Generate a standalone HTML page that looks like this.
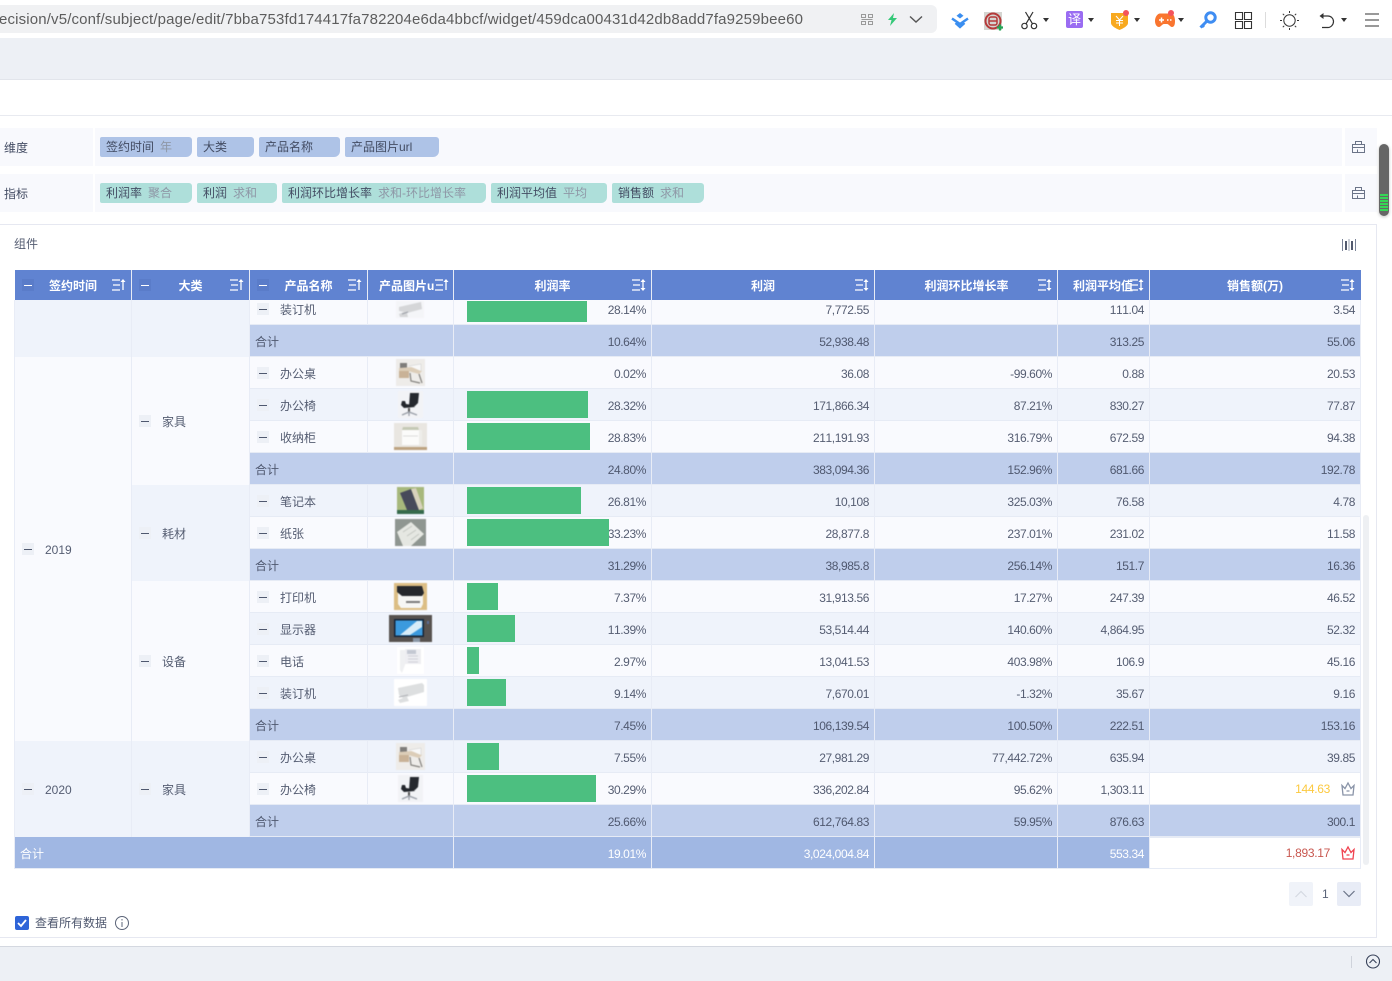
<!DOCTYPE html>
<html lang="zh">
<head>
<meta charset="utf-8">
<title>组件</title>
<style>
html,body{margin:0;padding:0;width:1392px;height:981px;overflow:hidden;background:#fff}
body{position:relative;font:12px/1.2 "Liberation Sans","Noto Sans CJK SC",sans-serif;color:#555d72;font-kerning:none}
div,span,svg{position:absolute;display:block;box-sizing:border-box}
svg{overflow:visible}
.l{white-space:nowrap}
.chip{height:20px;top:137px;border-radius:2px 3px 6px 2px;background:#aec3e7;line-height:20px;padding-left:6px;color:#434c63;white-space:nowrap;overflow:hidden}
.chip.m{top:183px;background:#aedfda}
.chip i{font-style:normal;color:#8e97a6;margin-left:6px}
.band{left:0;width:1342px;height:38px;background:#f8f9fd}
.band2{left:1345px;width:32px;height:38px;background:#f8f9fd}
.sep{left:93px;width:2px;height:38px;background:#fff}
.h{top:270px;height:30px;line-height:32px;color:#fff;font-weight:bold;text-align:center;white-space:nowrap}
.r{left:15px;width:1346px;border-bottom:1px solid #e6ebf5}
.lt{background:#f9fafe}.dk{background:#eff3fb}
.sub{background:#bfceec;left:250px;width:1111px;border-bottom:1px solid #e6ebf5;color:#4f586f}
.n{letter-spacing:-.4px;white-space:nowrap}
.a{right:715px}.b{right:492px}.c{right:309px}.d{right:217px}.e{right:6px}
.sl{left:5px;color:#4f586f}
.nm{left:265px;white-space:nowrap}
.box{width:12px;height:12px;background:#edf0f6}
.box:after{content:"";position:absolute;left:2px;top:6px;width:8px;height:1px;background:#4f586f}
.hb{background:#5a7cc9}
.hb:after{background:#fff}
.bar{left:467px;background:#4cbf80}
.v{width:1px;background:#e8ecf6}
.th{filter:blur(.45px)}
</style>
</head>
<body>
<!-- browser bar -->
<div style="left:0;top:5px;width:937px;height:28px;background:#f0f1f3;border-radius:0 6px 6px 0"></div>
<div class="l" style="left:-1px;top:9px;font-size:15px;line-height:21px;color:#5d5d5d;letter-spacing:.15px">ecision/v5/conf/subject/page/edit/7bba753fd174417fa782204e6da4bbcf/widget/459dca00431d42db8add7fa9259bee60</div>
<svg style="left:861px;top:14px" width="12" height="12" fill="none" stroke="#9a9a9a"><path d="M.5.5h4v3h-4zM7.500.5h4v3h-4zM.5 7.500h4v3h-4zM7.500 7.500h4v3h-4zM.5 5.500h11"/></svg>
<svg style="left:887px;top:13px" width="11" height="13"><path d="M7 0 1 7h3.500L3 13l7-8H6z" fill="#35c878"/></svg>
<svg style="left:909px;top:15px" width="14" height="9" fill="none" stroke="#555" stroke-width="1.400"><path d="M1 1.500 7 7l6-5.500"/></svg>
<svg style="left:950px;top:12px" width="20" height="17" fill="none" stroke="#3a8ef0" stroke-width="2.400"><path d="M10 1 13.500 3.800 10 6.500 6.500 3.800z" fill="#3a8ef0" stroke="none"/><path d="M2 6.500l8 5.500 8-5.500"/><path d="M5.500 11l4.500 4 4.500-4"/></svg>
<svg style="left:984px;top:12px" width="20" height="19"><rect width="18" height="18" fill="#d5d5d1"/><circle cx="9" cy="9" r="7.500" fill="none" stroke="#b53a3a" stroke-width="2"/><rect x="5" y="5" width="8" height="8" rx="2" fill="none" stroke="#b53a3a" stroke-width="1.500"/><path d="M5 9h8" stroke="#b53a3a" stroke-width="1.500"/><path d="M13 15.500h6M16 12.500v6" stroke="#23a455" stroke-width="2.200"/></svg>
<svg style="left:1021px;top:11px" width="17" height="19" fill="none" stroke="#333" stroke-width="1.200"><circle cx="3.500" cy="15" r="2.700"/><circle cx="13" cy="15" r="2.700"/><path d="M5 12.800 12 1M11.500 12.800 4.500 1"/></svg>
<svg style="left:1043px;top:18px" width="6" height="4"><path d="M0 0h6L3 4z" fill="#333"/></svg>
<div style="left:1066px;top:11px;width:17px;height:17px;background:#9a6cf2;border-radius:2px;color:#fff;font-size:13px;line-height:17px;text-align:center">译</div>
<svg style="left:1088px;top:18px" width="6" height="4"><path d="M0 0h6L3 4z" fill="#333"/></svg>
<svg style="left:1111px;top:10px" width="21" height="21"><path d="M0 3h17v10c0 3-5 5.500-8.500 7C5 18.500 0 16 0 13z" fill="#f8a91f"/><circle cx="15" cy="3" r="3" fill="#f4545c"/><path d="M5 6l3.500 4L12 6M5 10.500h7M5 13h7M8.500 10v6" fill="none" stroke="#fff" stroke-width="1"/></svg>
<svg style="left:1134px;top:18px" width="6" height="4"><path d="M0 0h6L3 4z" fill="#333"/></svg>
<svg style="left:1155px;top:10px" width="21" height="19"><path d="M5 3.500h11c2.500 0 4 3.500 4 7.500 0 3-.500 6-3 6-2 0-3-3-5-3H9c-2 0-3 3-5 3-2.500 0-4-3-4-6 0-4 2.500-7.500 5-7.500z" fill="#f9752f"/><circle cx="16" cy="3" r="3" fill="#f4545c"/><path d="M4 10h5M6.500 7.500v5M12 10h1.500M15 10h1.500" stroke="#fff" stroke-width="1.500" fill="none"/></svg>
<svg style="left:1178px;top:18px" width="6" height="4"><path d="M0 0h6L3 4z" fill="#333"/></svg>
<svg style="left:1199px;top:11px" width="18" height="18" fill="none" stroke="#3f8df2" stroke-width="3"><circle cx="11.500" cy="6.500" r="4.700"/><path d="M7.500 10.500 1.500 16.500M3 14l2 2"/></svg>
<svg style="left:1235px;top:12px" width="17" height="17" fill="none" stroke="#333" stroke-width="1.100"><path d="M.5.500h7v7h-7zM9.500.500h7v7h-7zM.5 9.500h7v7h-7zM9.500 9.500h7v7h-7z"/></svg>
<div style="left:1265px;top:12px;width:1px;height:16px;background:#dcdcdc"></div>
<svg style="left:1280px;top:11px" width="19" height="19" fill="none" stroke="#333"><circle cx="9.500" cy="9.500" r="5.700"/><path d="M9.500 0v2M9.500 17v2M0 9.500h2M17 9.500h2M2.800 2.800l1.400 1.400M14.800 14.800l1.400 1.400M2.800 16.200l1.400-1.400M14.800 4.200l1.400-1.400"/></svg>
<svg style="left:1319px;top:12px" width="16" height="17" fill="none" stroke="#333" stroke-width="1.200"><path d="M2 4h7c3 0 5.500 2.500 5.500 5.500S12 15.500 9 15.500H3"/><path d="M4.500 1 .5 4l4 3z" fill="#333" stroke="none"/></svg>
<svg style="left:1341px;top:18px" width="6" height="4"><path d="M0 0h6L3 4z" fill="#333"/></svg>
<svg style="left:1365px;top:13px" width="14" height="14" stroke="#333" stroke-width="1.100"><path d="M0 1h14M0 7h14M0 13h14"/></svg>
<div style="left:0;top:38px;width:1392px;height:42px;background:#edf0f5;border-bottom:1px solid #e2e5eb"></div>
<div style="left:0;top:115px;width:1392px;height:1px;background:#e8eaf0"></div>

<!-- field bands -->
<div class="band" style="top:128px"></div><div class="band2" style="top:128px"></div><div class="sep" style="top:128px"></div>
<div class="band" style="top:174px"></div><div class="band2" style="top:174px"></div><div class="sep" style="top:174px"></div>
<div class="l" style="left:4px;top:141px;color:#434c63">维度</div>
<div class="l" style="left:4px;top:187px;color:#434c63">指标</div>
<div class="chip" style="left:100px;width:92px">签约时间<i>年</i></div>
<div class="chip" style="left:197px;width:57px">大类</div>
<div class="chip" style="left:259px;width:81px">产品名称</div>
<div class="chip" style="left:345px;width:94px">产品图片url</div>
<div class="chip m" style="left:100px;width:92px">利润率<i>聚合</i></div>
<div class="chip m" style="left:197px;width:80px">利润<i>求和</i></div>
<div class="chip m" style="left:282px;width:204px">利润环比增长率<i>求和-环比增长率</i></div>
<div class="chip m" style="left:491px;width:116px">利润平均值<i>平均</i></div>
<div class="chip m" style="left:612px;width:92px">销售额<i>求和</i></div>
<svg style="left:1352px;top:141px" width="13" height="12" fill="none" stroke="#6b7488"><path d="M.5 3.500h12v8H.5zM3.500 3.500V.500h6v3M.5 6.500h12M5.500 8.500v3"/></svg>
<svg style="left:1352px;top:187px" width="13" height="12" fill="none" stroke="#6b7488"><path d="M.5 3.500h12v8H.5zM3.500 3.500V.500h6v3M.5 6.500h12M5.500 8.500v3"/></svg>
<!-- scroll widget -->
<div style="left:1379px;top:144px;width:10px;height:72px;background:#666;border-radius:5px;box-shadow:0 1px 3px rgba(0,0,0,.25);overflow:hidden">
<div style="left:1px;top:50px;width:8px;height:18px;background:repeating-linear-gradient(#35d655 0 2px,#666 2px 3px)"></div></div>

<!-- panel -->
<div style="left:-2px;top:224px;width:1379px;height:714px;border:1px solid #e6e8f1"></div>
<div class="l" style="left:14px;top:237px;color:#555d72">组件</div>
<svg style="left:1342px;top:239px" width="14" height="12" fill="none"><path d="M.5 0v12M13.500 0v12" stroke="#7a8397"/><path d="M4 2v9M10 2v9" stroke="#525a6e" stroke-width="2"/><path d="M7 0v12" stroke="#9aa2b2"/></svg>
<div style="left:1363px;top:515px;width:6px;height:350px;background:#eef0f3;border-radius:3px"></div>

<!-- table header -->
<div style="left:15px;top:270px;width:1346px;height:30px;background:#6083d1"></div>
<div class="box hb" style="left:22px;top:279px"></div>
<div class="box hb" style="left:139px;top:279px"></div>
<div class="box hb" style="left:257px;top:279px"></div>
<div class="h" style="left:49px;width:48px">签约时间</div>
<div class="h" style="left:178px;width:25px">大类</div>
<div class="h" style="left:284px;width:49px">产品名称</div>
<div class="h" style="left:379px;width:60px;text-align:left">产品图片u</div>
<div class="h" style="left:534px;width:37px">利润率</div>
<div class="h" style="left:751px;width:24px">利润</div>
<div class="h" style="left:924px;width:85px">利润环比增长率</div>
<div class="h" style="left:1073px;width:60px;text-align:left;overflow:hidden">利润平均值</div>
<div class="h" style="left:1226px;width:58px">销售额(万)</div>
<svg style="left:112px;top:279px" width="14" height="12" stroke="#fff" stroke-width="1.300" fill="none"><path d="M0 1h8M1 6h7M0 11h8M11 11V1"/><path d="M11 0l-2.500 3h5z" fill="#fff" stroke="none"/></svg>
<svg style="left:230px;top:279px" width="14" height="12" stroke="#fff" stroke-width="1.300" fill="none"><path d="M0 1h8M1 6h7M0 11h8M11 11V1"/><path d="M11 0l-2.500 3h5z" fill="#fff" stroke="none"/></svg>
<svg style="left:348px;top:279px" width="14" height="12" stroke="#fff" stroke-width="1.300" fill="none"><path d="M0 1h8M1 6h7M0 11h8M11 11V1"/><path d="M11 0l-2.500 3h5z" fill="#fff" stroke="none"/></svg>
<svg style="left:435px;top:279px" width="14" height="12" stroke="#fff" stroke-width="1.300" fill="none"><path d="M0 1h8M1 6h7M0 11h8M11 11V1"/><path d="M11 0l-2.500 3h5z" fill="#fff" stroke="none"/></svg>
<svg style="left:632px;top:279px" width="14" height="12" stroke="#fff" stroke-width="1.300" fill="none"><path d="M0 1h8M1 6h7M0 11h8M11 9V3"/><path d="M11 0l-2.500 3h5zM11 12l-2.500-3h5z" fill="#fff" stroke="none"/></svg>
<svg style="left:855px;top:279px" width="14" height="12" stroke="#fff" stroke-width="1.300" fill="none"><path d="M0 1h8M1 6h7M0 11h8M11 9V3"/><path d="M11 0l-2.500 3h5zM11 12l-2.500-3h5z" fill="#fff" stroke="none"/></svg>
<svg style="left:1038px;top:279px" width="14" height="12" stroke="#fff" stroke-width="1.300" fill="none"><path d="M0 1h8M1 6h7M0 11h8M11 9V3"/><path d="M11 0l-2.500 3h5zM11 12l-2.500-3h5z" fill="#fff" stroke="none"/></svg>
<svg style="left:1130px;top:279px" width="14" height="12" stroke="#fff" stroke-width="1.300" fill="none"><path d="M0 1h8M1 6h7M0 11h8M11 9V3"/><path d="M11 0l-2.500 3h5zM11 12l-2.500-3h5z" fill="#fff" stroke="none"/></svg>
<svg style="left:1341px;top:279px" width="14" height="12" stroke="#fff" stroke-width="1.300" fill="none"><path d="M0 1h8M1 6h7M0 11h8M11 9V3"/><path d="M11 0l-2.500 3h5zM11 12l-2.500-3h5z" fill="#fff" stroke="none"/></svg>

<!-- rows -->
<div class="r lt" style="top:300px;height:25px;line-height:20px"><span class="nm">装订机</span><span class="n a">28.14%</span><span class="n b">7,772.55</span><span class="n d">111.04</span><span class="n e">3.54</span></div>
<div class="r lt" style="top:357px;height:32px;line-height:34px"><span class="nm">办公桌</span><span class="n a">0.02%</span><span class="n b">36.08</span><span class="n c">-99.60%</span><span class="n d">0.88</span><span class="n e">20.53</span></div>
<div class="r dk" style="top:389px;height:32px;line-height:34px"><span class="nm">办公椅</span><span class="n a">28.32%</span><span class="n b">171,866.34</span><span class="n c">87.21%</span><span class="n d">830.27</span><span class="n e">77.87</span></div>
<div class="r lt" style="top:421px;height:32px;line-height:34px"><span class="nm">收纳柜</span><span class="n a">28.83%</span><span class="n b">211,191.93</span><span class="n c">316.79%</span><span class="n d">672.59</span><span class="n e">94.38</span></div>
<div class="r dk" style="top:485px;height:32px;line-height:34px"><span class="nm">笔记本</span><span class="n a">26.81%</span><span class="n b">10,108</span><span class="n c">325.03%</span><span class="n d">76.58</span><span class="n e">4.78</span></div>
<div class="r lt" style="top:517px;height:32px;line-height:34px"><span class="nm">纸张</span><span class="n a">33.23%</span><span class="n b">28,877.8</span><span class="n c">237.01%</span><span class="n d">231.02</span><span class="n e">11.58</span></div>
<div class="r lt" style="top:581px;height:32px;line-height:34px"><span class="nm">打印机</span><span class="n a">7.37%</span><span class="n b">31,913.56</span><span class="n c">17.27%</span><span class="n d">247.39</span><span class="n e">46.52</span></div>
<div class="r dk" style="top:613px;height:32px;line-height:34px"><span class="nm">显示器</span><span class="n a">11.39%</span><span class="n b">53,514.44</span><span class="n c">140.60%</span><span class="n d">4,864.95</span><span class="n e">52.32</span></div>
<div class="r lt" style="top:645px;height:32px;line-height:34px"><span class="nm">电话</span><span class="n a">2.97%</span><span class="n b">13,041.53</span><span class="n c">403.98%</span><span class="n d">106.9</span><span class="n e">45.16</span></div>
<div class="r dk" style="top:677px;height:32px;line-height:34px"><span class="nm">装订机</span><span class="n a">9.14%</span><span class="n b">7,670.01</span><span class="n c">-1.32%</span><span class="n d">35.67</span><span class="n e">9.16</span></div>
<div class="r dk" style="top:741px;height:32px;line-height:34px"><span class="nm">办公桌</span><span class="n a">7.55%</span><span class="n b">27,981.29</span><span class="n c">77,442.72%</span><span class="n d">635.94</span><span class="n e">39.85</span></div>
<div class="r lt" style="top:773px;height:32px;line-height:34px"><span class="nm">办公椅</span><span class="n a">30.29%</span><span class="n b">336,202.84</span><span class="n c">95.62%</span><span class="n d">1,303.11</span></div>

<!-- merged left cells -->
<div class="dk" style="left:15px;top:300px;width:235px;height:57px"></div>
<div class="lt" style="left:15px;top:357px;width:117px;height:384px"></div>
<div class="lt" style="left:132px;top:357px;width:118px;height:128px"></div>
<div class="dk" style="left:132px;top:485px;width:118px;height:96px"></div>
<div class="lt" style="left:132px;top:581px;width:118px;height:160px"></div>
<div class="dk" style="left:15px;top:741px;width:235px;height:96px"></div>
<div class="box" style="left:22px;top:543px"></div><div class="n" style="left:45px;top:543px;line-height:15px;letter-spacing:0">2019</div>
<div class="box" style="left:22px;top:783px"></div><div class="n" style="left:45px;top:783px;line-height:15px;letter-spacing:0">2020</div>
<div class="box" style="left:139px;top:415px"></div><div class="l" style="left:162px;top:415px;line-height:15px">家具</div>
<div class="box" style="left:139px;top:527px"></div><div class="l" style="left:162px;top:527px;line-height:15px">耗材</div>
<div class="box" style="left:139px;top:655px"></div><div class="l" style="left:162px;top:655px;line-height:15px">设备</div>
<div class="box" style="left:139px;top:783px"></div><div class="l" style="left:162px;top:783px;line-height:15px">家具</div>

<!-- sub-total rows -->
<div class="sub" style="top:325px;height:32px;line-height:34px"><span class="sl">合计</span><span class="n a">10.64%</span><span class="n b">52,938.48</span><span class="n d">313.25</span><span class="n e">55.06</span></div>
<div class="sub" style="top:453px;height:32px;line-height:34px"><span class="sl">合计</span><span class="n a">24.80%</span><span class="n b">383,094.36</span><span class="n c">152.96%</span><span class="n d">681.66</span><span class="n e">192.78</span></div>
<div class="sub" style="top:549px;height:32px;line-height:34px"><span class="sl">合计</span><span class="n a">31.29%</span><span class="n b">38,985.8</span><span class="n c">256.14%</span><span class="n d">151.7</span><span class="n e">16.36</span></div>
<div class="sub" style="top:709px;height:32px;line-height:34px"><span class="sl">合计</span><span class="n a">7.45%</span><span class="n b">106,139.54</span><span class="n c">100.50%</span><span class="n d">222.51</span><span class="n e">153.16</span></div>
<div class="sub" style="top:805px;height:32px;line-height:34px"><span class="sl">合计</span><span class="n a">25.66%</span><span class="n b">612,764.83</span><span class="n c">59.95%</span><span class="n d">876.63</span><span class="n e">300.1</span></div>
<div style="left:15px;top:837px;width:1346px;height:32px;line-height:34px;background:#a0b7e3;color:#fff;border-bottom:1px solid #e6ebf5"><span style="left:5px">合计</span><span class="n a">19.01%</span><span class="n b">3,024,004.84</span><span class="n d">553.34</span></div>

<!-- highlighted cells -->
<div style="left:1150px;top:773px;width:211px;height:32px;background:#fff;border-bottom:1px solid #e6ebf5"></div>
<div class="n" style="right:62px;top:782px;line-height:15px;color:#fcc93f;letter-spacing:-.3px">144.63</div>
<svg style="left:1341px;top:782px" width="14" height="14" fill="none" stroke="#8a94a8" stroke-width="1.300"><path d="M1 3.500 4 6.500 7 1l3 5.500 3-3-1 9.500H2zM5.500 9h3"/></svg>
<div style="left:1150px;top:837px;width:211px;height:32px;background:#fff;border:1px solid #e6ebf5;border-left:0"></div>
<div class="n" style="right:62px;top:846px;line-height:15px;color:#c8574f;letter-spacing:-.3px">1,893.17</div>
<svg style="left:1341px;top:846px" width="14" height="14" fill="none" stroke="#f0424f" stroke-width="1.300"><path d="M1 3.500 4 6.500 7 1l3 5.500 3-3-1 9.500H2zM5.500 9h3"/></svg>

<!-- bars -->
<div class="bar" style="top:301px;width:120px;height:21px"></div>
<div class="bar" style="top:391px;width:121px;height:27px"></div>
<div class="bar" style="top:423px;width:123px;height:27px"></div>
<div class="bar" style="top:487px;width:114px;height:27px"></div>
<div class="bar" style="top:519px;width:142px;height:27px"></div>
<div class="bar" style="top:583px;width:31px;height:27px"></div>
<div class="bar" style="top:615px;width:48px;height:27px"></div>
<div class="bar" style="top:647px;width:12px;height:27px"></div>
<div class="bar" style="top:679px;width:39px;height:27px"></div>
<div class="bar" style="top:743px;width:32px;height:27px"></div>
<div class="bar" style="top:775px;width:129px;height:27px"></div>

<!-- name collapse boxes -->
<div class="box" style="left:257px;top:303px"></div>
<div class="box" style="left:257px;top:367px"></div>
<div class="box" style="left:257px;top:399px"></div>
<div class="box" style="left:257px;top:431px"></div>
<div class="box" style="left:257px;top:495px"></div>
<div class="box" style="left:257px;top:527px"></div>
<div class="box" style="left:257px;top:591px"></div>
<div class="box" style="left:257px;top:623px"></div>
<div class="box" style="left:257px;top:655px"></div>
<div class="box" style="left:257px;top:687px"></div>
<div class="box" style="left:257px;top:751px"></div>
<div class="box" style="left:257px;top:783px"></div>

<!-- grid lines -->
<div class="v" style="left:14px;top:300px;height:569px"></div>
<div class="v" style="left:131px;top:270px;height:87px"></div>
<div class="v" style="left:131px;top:357px;height:480px"></div>
<div class="v" style="left:249px;top:270px;height:567px"></div>
<div class="v" style="left:367px;top:270px;height:55px"></div>
<div class="v" style="left:367px;top:357px;height:96px"></div>
<div class="v" style="left:367px;top:485px;height:64px"></div>
<div class="v" style="left:367px;top:581px;height:128px"></div>
<div class="v" style="left:367px;top:741px;height:64px"></div>
<div class="v" style="left:453px;top:270px;height:599px"></div>
<div class="v" style="left:651px;top:270px;height:599px"></div>
<div class="v" style="left:874px;top:270px;height:599px"></div>
<div class="v" style="left:1057px;top:270px;height:599px"></div>
<div class="v" style="left:1149px;top:270px;height:599px"></div>
<div class="v" style="left:1360px;top:300px;height:569px"></div>

<!-- thumbnails -->
<svg class="th" style="left:396px;top:301px" width="28" height="17"><rect width="28" height="17" fill="#f4f5f8"/><path d="M3 6 25 1l1 7-15 4 1 4H4l-1-3 5-2-5-1z" fill="#d5d6d8"/><path d="M6 13l6-2" stroke="#9a9ea6"/></svg>
<svg class="th" style="left:396px;top:359px" width="29" height="27"><rect width="29" height="27" fill="#eeece9"/><path d="M3 10h10v9H3z" fill="#c9b297"/><path d="M4 4h7v6H4z" fill="#7f7d7a"/><path d="M3 9l14-1 9 4-3 3-11-3H3z" fill="#dccdb8"/><path d="M13 7l12-2v7" fill="#f8f8f8" stroke="#ccc" stroke-width=".5"/><path d="M23 15l3 9M14 14l1 8 9 2" stroke="#85837f" fill="none" stroke-width="1.200"/></svg>
<svg class="th" style="left:398px;top:391px" width="25" height="27"><rect width="25" height="27" fill="#f2f3f6"/><path d="M12 2h9l-1 10-3 3h-6z" fill="#26292f"/><path d="M4 10h3l1 3 7 1 2 2-11 1-3-3z" fill="#23262c"/><path d="M11 17v4" stroke="#555" stroke-width="2"/><path d="M4 24l7-3 8 3M11 21v4" stroke="#9a9fa8" fill="none" stroke-width="1.300"/></svg>
<svg class="th" style="left:394px;top:423px" width="33" height="27"><rect width="33" height="27" fill="#e9e6e1"/><path d="M8 7h17v15H8z" fill="#fbfbfa"/><path d="M25 7h3v15h-3z" fill="#eeedea"/><path d="M9 4h15l1 3H8z" fill="#c5c9b5"/><path d="M9 13h15" stroke="#ddd"/><rect y="24" width="33" height="3" fill="#bda381"/></svg>
<svg class="th" style="left:397px;top:487px" width="27" height="27"><rect width="27" height="27" fill="#a7b87c"/><path d="M3 6 14 2l8 21H10z" fill="#474a5a"/><path d="M14 2l5-1 7 20-4 2z" fill="#d8d2bc"/><rect y="23" width="27" height="4" fill="#366a4c"/></svg>
<svg class="th" style="left:395px;top:519px" width="31" height="27"><rect width="31" height="27" fill="#8f9691"/><path d="M2 13 16 3l13 12-13 12H8z" fill="#e5e7e2"/><path d="M8 13l9-6M12 17l9-6M16 21l8-6" stroke="#c3c7c1"/></svg>
<svg class="th" style="left:394px;top:583px" width="33" height="27"><rect width="33" height="27" fill="#dcbe85"/><path d="M4 10h25v11l-2 4H7l-3-4z" fill="#f6f6f4"/><path d="M3 3h25l2 7-2 3H8L3 9z" fill="#26282c"/><path d="M12 18h14v2H12z" fill="#7b7b7b"/></svg>
<svg class="th" style="left:389px;top:615px" width="43" height="27"><rect width="43" height="27" fill="#57524f"/><rect x="5" y="4" width="30" height="18" fill="#16263a"/><path d="M6.500 5.500h27v15h-27z" fill="#3b9ade"/><path d="M11 20 28 6h5v6L21 20z" fill="#d8ecf8"/><rect x="24" y="23" width="7" height="4" fill="#8a97a6"/><rect x="38" y="6" width="2" height="3" fill="#5b6d9a"/></svg>
<svg class="th" style="left:397px;top:647px" width="27" height="27"><rect width="27" height="27" fill="#fff"/><path d="M8 2h16v15H8z" fill="#eeeef2"/><path d="M10 3h9v4h-9z" fill="#c4c8d2"/><path d="M3 3h5v15l-3 8-2-3z" fill="#eff0f2"/><path d="M11 9h10M11 12h10M11 15h10" stroke="#cfd1d8"/></svg>
<svg class="th" style="left:394px;top:679px" width="33" height="27"><rect width="33" height="27" fill="#fff"/><path d="M4 9 28 4l2 2v7l-17 5 2 4-9 2-2-3 5-2-4-3z" fill="#dddfe0"/><path d="M5 18l9-2" stroke="#aeb0b5"/></svg>
<svg class="th" style="left:396px;top:743px" width="29" height="27"><rect width="29" height="27" fill="#eeece9"/><path d="M3 10h10v9H3z" fill="#c9b297"/><path d="M4 4h7v6H4z" fill="#7f7d7a"/><path d="M3 9l14-1 9 4-3 3-11-3H3z" fill="#dccdb8"/><path d="M13 7l12-2v7" fill="#f8f8f8" stroke="#ccc" stroke-width=".5"/><path d="M23 15l3 9M14 14l1 8 9 2" stroke="#85837f" fill="none" stroke-width="1.200"/></svg>
<svg class="th" style="left:398px;top:775px" width="25" height="27"><rect width="25" height="27" fill="#f2f3f6"/><path d="M12 2h9l-1 10-3 3h-6z" fill="#26292f"/><path d="M4 10h3l1 3 7 1 2 2-11 1-3-3z" fill="#23262c"/><path d="M11 17v4" stroke="#555" stroke-width="2"/><path d="M4 24l7-3 8 3M11 21v4" stroke="#9a9fa8" fill="none" stroke-width="1.300"/></svg>

<!-- pagination -->
<div style="left:1289px;top:882px;width:24px;height:24px;background:#f0f3f9;border-radius:2px"></div>
<svg style="left:1295px;top:890px" width="12" height="8" fill="none" stroke="#d5d9e2" stroke-width="1.200"><path d="M.5 7 6 1.500 11.500 7"/></svg>
<div class="l" style="left:1322px;top:887px;line-height:14px;color:#5b6478">1</div>
<div style="left:1337px;top:882px;width:24px;height:24px;background:#e8ecf6;border-radius:2px"></div>
<svg style="left:1343px;top:890px" width="12" height="8" fill="none" stroke="#6b7488" stroke-width="1.200"><path d="M.5 1 6 6.500 11.500 1"/></svg>

<!-- footer controls -->
<div style="left:15px;top:916px;width:14px;height:14px;background:#2e64d8;border-radius:2px"></div>
<svg style="left:17px;top:919px" width="10" height="8" fill="none" stroke="#fff" stroke-width="1.800"><path d="M1 4l3 3 5-6"/></svg>
<div class="l" style="left:35px;top:915px;line-height:16px;color:#4f586f">查看所有数据</div>
<svg style="left:115px;top:916px" width="14" height="14" fill="none" stroke="#5b6478"><circle cx="7" cy="7" r="6.500"/><path d="M7 6v5M7 3v1.500"/></svg>

<!-- footer bar -->
<div style="left:0;top:946px;width:1392px;height:35px;background:#edf0f5;border-top:1px solid #d4d8e0"></div>
<div style="left:1351px;top:956px;width:1px;height:12px;background:#cfd3db"></div>
<svg style="left:1366px;top:954px" width="14" height="15" fill="none" stroke="#38425a" stroke-width="1.100"><circle cx="7" cy="7.500" r="6.500"/><path d="M3.500 9 7 5.500 10.500 9"/></svg>
</body>
</html>
